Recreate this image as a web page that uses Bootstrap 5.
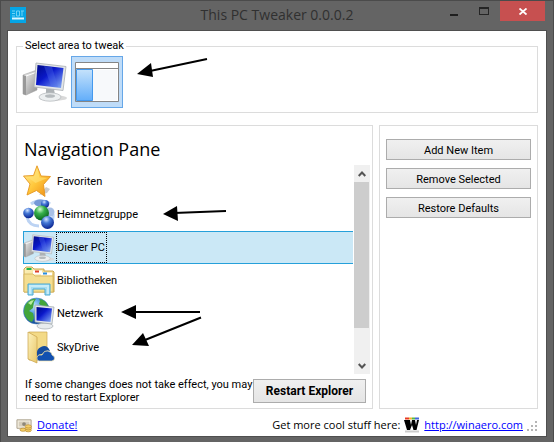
<!DOCTYPE html>
<html lang="en">
<head>
<meta charset="utf-8">
<meta name="viewport" content="width=device-width, initial-scale=1">
<title>This PC Tweaker 0.0.0.2</title>
<link href="https://cdn.jsdelivr.net/npm/bootstrap@5.3.0/dist/css/bootstrap.min.css" rel="stylesheet">
<style>
body { font: 11px/13px Roboto, "Liberation Sans", Arial, sans-serif; color: #000; background: #646464; }
svg { display: block; flex: none; }
.app-window { min-height: 100vh; border: 1px solid #4b4b4b; border-width: 1px 1px 0; padding: 0 7px 6px; }
.title-bar { height: 30px; }
.app-icon { top: 6px; left: 2px; }
.app-title { font: 14px/28px "Open Sans", "Noto Sans", sans-serif; color: #303030; }
.caption-btns { top: 0; right: 0; }
.caption-btns button { border: 0; padding: 0; width: 26px; height: 20px; background: none; display: flex; align-items: center; justify-content: center; }
.caption-btns button.close-btn { width: 45px; background: #c75050; margin-left: 3px; }
.client { background: #fff; padding: 7px 8px 0; box-shadow: 0 0 0 1px #4f4f4f; }
.area-box { border: 1px solid #dcdcdc; padding: 2px 5px 4px; margin-bottom: 12px; }
.area-box legend { float: none; width: auto; margin: 0 0 0 1px; padding: 0 2px; font-size: 11px; line-height: 16px; }
.area-btn { width: 48px; height: 52px; border: 0; padding: 0; background: none; display: flex; align-items: center; }
.area-btn.chosen { width: 52px; border: 1px solid #66a7e8; background: #bfdcf8; justify-content: center; margin-left: 1px; }
.panes { display: grid; grid-template-columns: minmax(0, 1fr) 159px; gap: 6px; }
.pane { border: 1px solid #dcdcdc; }
.nav-pane { padding: 0 2px 0 6px; }
.nav-pane h1 { font: 400 18px/30px "Open Sans", "Noto Sans", sans-serif; margin: 0; padding: 8px 0 1px 1px; }
.nav-list { padding-right: 1px; }
.nav-list .list-group-item { height: 33px; padding: 0; border: 1px solid transparent; border-width: 1px 0 1px 1px; background: none; color: #000; display: flex; align-items: center; margin: 0; }
.nav-list .list-group-item.picked { background: #cbe8f6; border-color: #26a0da; }
.item-label { padding: 1px 1px 0 0; line-height: 28px; border: 1px dotted transparent; }
.picked .item-label { border-color: #000; }
.nav-list svg { margin-left: -1px; margin-right: 1px; }
.scroll-track { width: 16px; background: #f0f0f0; }
.scroll-track button { border: 0; padding: 0; height: 17px; background: none; display: flex; align-items: center; justify-content: center; }
.scroll-thumb { height: 146px; background: #cdcdcd; margin-right: 1px; }
.note-row { height: 34px; padding: 0 4px 0 2px; }
.push-btn { border: 1px solid #acacac; border-radius: 0; padding: 1px 0 0; height: 21px; line-height: 13px; font-size: 11px; color: #000; background: linear-gradient(#f0f0f0, #e5e5e5); }
.restart-btn { width: 113px; height: 24px; font-weight: bold; font-size: 12px; }
.side-pane { padding: 13px 6px; gap: 8px; }
.foot { height: 27px; padding-top: 5px; font: 11px/16px "Open Sans", "Noto Sans", sans-serif; }
.foot a { color: #00f; }
.arrows { top: 0; left: 0; pointer-events: none; }
</style>
</head>
<body>
<svg width="0" height="0" class="position-absolute" aria-hidden="true">
  <defs>
    <linearGradient id="screen" x1="0" y1="0" x2="1" y2="1"><stop offset="0" stop-color="#000a86"/><stop offset=".42" stop-color="#0a18c8"/><stop offset=".5" stop-color="#1b2dd4"/><stop offset="1" stop-color="#8ab2f4"/></linearGradient>
    <linearGradient id="metal" x1="0" y1="0" x2="1" y2="1"><stop offset="0" stop-color="#f4f4f4"/><stop offset="1" stop-color="#8e8e8e"/></linearGradient>
    <linearGradient id="gold" x1="0" y1="0" x2="1" y2="1"><stop offset="0" stop-color="#fff3a4"/><stop offset=".5" stop-color="#ffc83c"/><stop offset="1" stop-color="#ed8712"/></linearGradient>
    <linearGradient id="folder" x1="0" y1="0" x2="1" y2="1"><stop offset="0" stop-color="#fdf2bd"/><stop offset="1" stop-color="#e8c769"/></linearGradient>
    <linearGradient id="pane-blue" x1="0" y1="0" x2="0" y2="1"><stop offset="0" stop-color="#c5e2fb"/><stop offset="1" stop-color="#63aefa"/></linearGradient>
    <radialGradient id="ball-blue" cx=".4" cy=".25" r=".75"><stop offset="0" stop-color="#d3e4ff"/><stop offset=".4" stop-color="#4478d6"/><stop offset="1" stop-color="#0a2390"/></radialGradient>
    <radialGradient id="ball-green" cx=".4" cy=".25" r=".75"><stop offset="0" stop-color="#d2fbd0"/><stop offset=".4" stop-color="#37b14b"/><stop offset="1" stop-color="#08641c"/></radialGradient>
    <radialGradient id="sea" cx=".4" cy=".3" r=".7"><stop offset="0" stop-color="#bde6ff"/><stop offset=".5" stop-color="#3e8fdc"/><stop offset="1" stop-color="#0e4597"/></radialGradient>
    <symbol id="pc" viewBox="0 0 46 40">
      <ellipse cx="31" cy="36" rx="14" ry="3" fill="#d9d9d9"/>
      <path d="M1 13l14-5v20L4 33l-3-1z" fill="url(#metal)" stroke="#a5a5a5" stroke-width=".6"/>
      <path d="M1 13l3 1v19l-3-1z" fill="#999"/><path d="M4 14l11-4" stroke="#fff"/>
      <path d="M24 27h8l1 6h-9z" fill="#adb2b5"/>
      <ellipse cx="28" cy="35" rx="11" ry="4.200" fill="#eceff0" stroke="#b0b5b8" stroke-width=".7"/>
      <ellipse cx="28" cy="34" rx="5" ry="1.800" fill="#b5babd"/>
      <path d="M14 1l30 3.500-3 24-29-3.500z" fill="#e3e6e8" stroke="#a9aeb2" stroke-width=".8"/>
      <path d="M15.500 3l26 3-2.500 20-25-3z" fill="url(#screen)"/>
      <path d="M22 4l8 1 6 20-7-1z" fill="#5070ec" opacity=".35"/>
    </symbol>
  </defs>
</svg>

<div class="app-window d-flex flex-column position-relative">
  <header class="title-bar d-flex justify-content-center position-relative">
    <svg class="app-icon position-absolute" width="16" height="16" viewBox="0 0 16 16" role="img" aria-label="Application"><path fill="#05a5e5" d="M0 0h16v16H0z"/><path d="M2 4h3M2 6.500h3M2 9h3M6.500 4h3v5h-3zM11 4h3M12 4v5" fill="none" stroke="#6ed2f6"/><path d="M2 11.500h12" stroke="#d8f5ff" stroke-width="2"/></svg>
    <div class="app-title">This PC Tweaker 0.0.0.2</div>
  </header>
  <div class="caption-btns position-absolute d-flex me-1 pe-1">
    <button type="button" aria-label="Minimize"><svg width="8" height="4" viewBox="0 0 8 4" class="mt-2"><path fill="#1f1f1f" d="M0 1h8v2H0z"/></svg></button>
    <button type="button" class="ms-1" aria-label="Maximize"><svg width="10" height="8" viewBox="0 0 10 8"><path fill="#252525" fill-rule="evenodd" d="M0 0h10v8H0zM1 2v5h8V2z"/></svg></button>
    <button type="button" class="close-btn" aria-label="Close"><svg width="8" height="7" viewBox="0 0 8 7"><path d="M.5.500l7 6m0-6l-7 6" stroke="#fff" stroke-width="1.800"/></svg></button>
  </div>

  <main class="client flex-grow-1 d-flex flex-column">
    <fieldset class="area-box">
      <legend>Select area to tweak</legend>
      <div class="d-flex">
        <button type="button" class="area-btn" aria-label="This PC"><svg width="46" height="40"><use href="#pc"/></svg></button>
        <button type="button" class="area-btn chosen" aria-label="Navigation pane"><svg width="44" height="40" viewBox="0 0 44 40"><path fill="#fff" stroke="#858585" d="M.5.500h43v39H.5z"/><path fill="#f7f9fb" d="M18 8h24v30H18z"/><path stroke="#858585" d="M1 6.500h42"/><path fill="url(#pane-blue)" stroke="#4499ee" d="M1.500 7.500h16v31h-16z"/></svg></button>
      </div>
    </fieldset>

    <div class="panes flex-grow-1">
      <section class="pane nav-pane d-flex flex-column">
        <h1>Navigation Pane</h1>
        <div class="d-flex flex-grow-1">
          <div class="nav-list list-group list-group-flush flex-grow-1">
            <button type="button" class="list-group-item text-start">
              <svg width="32" height="33" viewBox="0 0 32 33"><path d="M16 30l8-2 3-4-4-2z" fill="#ccc"/><path d="M14 .8l4 10.200 9.500.5-7 8 1.500 12-8.500-6-9.500 4.500 3-11-6.500-8 10-.5z" fill="url(#gold)" stroke="#e5951e" stroke-width=".9" stroke-linejoin="round"/><path d="M14 3l2.500 9.500 8 .5-12 5-8-6 6.500-.5z" fill="#ffe378" opacity=".6"/></svg>
              <span class="item-label">Favoriten</span>
            </button>
            <button type="button" class="list-group-item text-start">
              <svg width="32" height="33" viewBox="0 0 32 33"><path d="M8 6a14 12 0 0 1 19 0M4 19q2 9 12 9M30 16q1 9-7 12" fill="none" stroke="#bcd3f3" stroke-width="3"/><ellipse cx="17" cy="5" rx="6" ry="3.500" fill="#7599d7"/><circle cx="22" cy="6" r="4" fill="url(#ball-blue)"/><circle cx="5.500" cy="15" r="5.300" fill="url(#ball-blue)"/><circle cx="27" cy="14" r="4.500" fill="#a8c0e6"/><circle cx="18.500" cy="15" r="7.500" fill="url(#ball-green)"/><circle cx="24.500" cy="24.500" r="6.500" fill="url(#ball-blue)"/></svg>
              <span class="item-label">Heimnetzgruppe</span>
            </button>
            <button type="button" class="list-group-item picked text-start" aria-current="true">
              <svg width="32" height="30"><use href="#pc"/></svg>
              <span class="item-label">Dieser PC</span>
            </button>
            <button type="button" class="list-group-item text-start">
              <svg width="32" height="30" viewBox="0 0 32 30"><path d="M1 25V3l2-2h6l2 2h10V5h9l1 1v20H1z" fill="url(#folder)" stroke="#caa64e"/><path d="M3.500 3h5" stroke="#21b54a" stroke-width="2"/><path d="M10 4.500h9v4h-9zM18 6.500h11v3H18z" fill="#fff"/><path d="M12 5.500h4" stroke="#de4029" stroke-width="2"/><path d="M20 7.500h4" stroke="#298ee0" stroke-width="2"/><path d="M1 8h9l2 2h18v16H1z" fill="#f4de91" stroke="#d3b35a" stroke-width=".8"/><path d="M5 29V18h22v11h-5v-6H10v6z" fill="#a5ddf1" stroke="#4ba9d3"/><path d="M6 20h20M7 21v7M25 21v7" stroke="#e8faff"/></svg>
              <span class="item-label">Bibliotheken</span>
            </button>
            <button type="button" class="list-group-item text-start">
              <svg width="32" height="33" viewBox="0 0 32 33"><circle cx="13.500" cy="14" r="13" fill="url(#sea)" stroke="#4c82b7" stroke-width=".6"/><path d="M3 7q5-6 10-5l-2 3-1 6-4 3 4 2 1 5-2 4q-6-2-8-9 0-6 2-9zM16 2q7 1 9 7l-4 1-5-3 1-3z" fill="#43a53b"/><path d="M5 6q3-3 6-3L8 8z" fill="#b9eca1"/><path d="M19 24h6l1 6h-7z" fill="#999"/><ellipse cx="22" cy="29" rx="8" ry="3" fill="#e8ecee" stroke="#a6adb1" stroke-width=".7"/><path d="M12 8l19 2-2 17-17-2z" fill="#e4e8eb" stroke="#9ba3a8" stroke-width=".7"/><path d="M13.500 10l15.500 1.500-1.500 13.500-14-1.500z" fill="url(#screen)"/></svg>
              <span class="item-label">Netzwerk</span>
            </button>
            <button type="button" class="list-group-item text-start">
              <svg width="32" height="33" viewBox="0 0 32 33"><path d="M6 1h18v25l-5 3H6z" fill="#f3da87" stroke="#cda84f" stroke-width=".7"/><path d="M5 1l9 5v26l-9-4z" fill="url(#folder)" stroke="#c8a147" stroke-width=".7"/><path d="M14 24q-1-6 4-8 6-3 9 4-5-2-8 3-4 0-5 3z" fill="#154c9f"/><path d="M16 30q-3-1-2-4 1-3 5-2 2-5 6-4 4 1 4 4 3 1 2.500 4-1 2-3 2z" fill="#1250b0" stroke="#f5e4aa" stroke-width=".7"/></svg>
              <span class="item-label">SkyDrive</span>
            </button>
          </div>
          <div class="scroll-track d-flex flex-column">
            <button type="button" aria-label="Scroll up"><svg width="8" height="6" viewBox="0 0 8 6"><path d="M.7 5L4 1.500 7.300 5" fill="none" stroke="#555" stroke-width="2"/></svg></button>
            <div class="scroll-thumb"></div>
            <button type="button" class="mt-auto" aria-label="Scroll down"><svg width="8" height="6" viewBox="0 0 8 6"><path d="M.7 1L4 4.500 7.300 1" fill="none" stroke="#555" stroke-width="2"/></svg></button>
          </div>
        </div>
        <div class="note-row d-flex align-items-center justify-content-between">
          <div>If some changes does not take effect, you may<br>need to restart Explorer</div>
          <button type="button" class="btn push-btn restart-btn">Restart Explorer</button>
        </div>
      </section>
      <section class="pane side-pane d-flex flex-column">
        <button type="button" class="btn push-btn">Add New Item</button>
        <button type="button" class="btn push-btn">Remove Selected</button>
        <button type="button" class="btn push-btn">Restore Defaults</button>
      </section>
    </div>

    <footer class="foot d-flex align-items-center">
      <svg width="17" height="16" viewBox="0 0 18 16" class="me-1"><path d="M1 2.500h15v9H1z" fill="#f0eadc" stroke="#aaa08c"/><path d="M3 4.500h11v5H3z" fill="#d5cdbb"/><circle cx="8.500" cy="7" r="2" fill="#8e8778"/><g fill="#f4ce68" stroke="#b88a2e" stroke-width=".7"><ellipse cx="7.500" cy="13" rx="3.300" ry="1.700"/><ellipse cx="13" cy="13.500" rx="3.300" ry="1.700"/><ellipse cx="13" cy="11.500" rx="3.300" ry="1.700"/><ellipse cx="13" cy="9.500" rx="3.300" ry="1.700"/></g></svg>
      <a href="#donate">Donate!</a>
      <span class="ms-auto me-1">Get more cool stuff here:</span>
      <svg width="16" height="16" viewBox="0 0 16 16" class="me-1"><path d="M1 14.500h14" stroke="#ccc" stroke-width="2"/><path d="M0 3h6l1 5 1-5h3l1 5 1-5h2l-2.500 10H9.500L8 8l-2 5H3z" fill="#000"/><path d="M1 1.500h4" stroke="#e63a24" stroke-width="2"/><path d="M5 1.500h3" stroke="#f4b52e" stroke-width="2"/><path d="M8 1.500h3" stroke="#55b948" stroke-width="2"/><path d="M11 1.500h4" stroke="#4366dc" stroke-width="2"/></svg>
      <a href="http://winaero.com">http://winaero.com</a>
      <svg width="11" height="11" viewBox="0 0 11 11" class="ms-1 align-self-end mb-1"><path fill="#b5b5b5" d="M8 0h2v2H8zM4 4h2v2H4zM8 4h2v2H8zM0 8h2v2H0zM4 8h2v2H4zM8 8h2v2H8z"/></svg>
    </footer>
  </main>
</div>

<svg class="arrows position-absolute" width="554" height="442" viewBox="0 0 554 442" aria-hidden="true">
  <g stroke="#000" stroke-width="2"><path d="M207 59l-57 12M226 211l-52 2M200 312h-66M201 317.500l-56 22.500"/></g>
  <path d="M137 74l14-11 2 14zM163 214l14-8 1 15zM121 312l15-7v14zM132 345l11-12 6 13z"/>
</svg>
<script src="https://cdn.jsdelivr.net/npm/bootstrap@5.3.0/dist/js/bootstrap.bundle.min.js"></script>
</body>
</html>
